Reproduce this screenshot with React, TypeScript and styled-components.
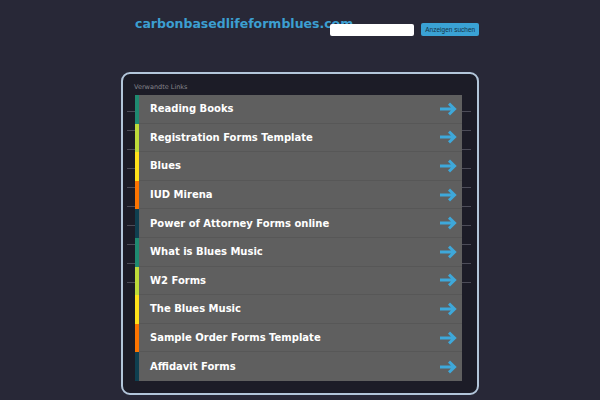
import styled, { createGlobalStyle } from 'styled-components';

const GlobalStyle = createGlobalStyle`
  html, body {
    margin: 0;
    padding: 0;
    background: #282837;
  }
  body {
    font-family: "DejaVu Sans", Verdana, sans-serif;
  }
`;

const Page = styled.div`
  width: 358px;
  margin: 0 auto;
  padding-top: 16px;
`;

const Header = styled.div`
  display: flex;
  align-items: flex-start;
  padding-left: 14px;
  height: 56px;
`;

const Title = styled.div`
  font-size: 12.5px;
  line-height: 15px;
  font-weight: bold;
  color: #3c9fd1;
  white-space: nowrap;
`;

const SearchForm = styled.div`
  display: flex;
  align-items: center;
  gap: 7px;
  margin-left: -23px;
  margin-top: 7px;
`;

const SearchInput = styled.div`
  width: 84px;
  height: 12px;
  background: #ffffff;
  border-radius: 2px;
`;

const SearchButton = styled.div`
  width: 58px;
  height: 13px;
  background: #3aa2d4;
  border-radius: 2px;
  color: #173246;
  font-family: "Liberation Sans", Arial, sans-serif;
  font-size: 6.5px;
  line-height: 13px;
  text-align: center;
`;

const Panel = styled.div`
  border: 2px solid #b3c6da;
  border-radius: 9px;
  background: #1c1c27;
  padding: 9px 6px 12px 4px;
  height: 323px;
  box-sizing: border-box;
`;

const Label = styled.div`
  font-size: 6.5px;
  line-height: 9px;
  color: #85858c;
  margin-left: 7px;
  margin-bottom: 3px;
`;

const ListFrame = styled.div`
  padding: 0 9px 0 8px;
  background-image: repeating-linear-gradient(
    to bottom,
    transparent 0,
    transparent 18px,
    #4c4c58 18px,
    #4c4c58 19px
  );
  background-size: 100% 190px;
  background-position: 0 -2px;
  background-repeat: no-repeat;
`;

const List = styled.div`
  display: flex;
  flex-direction: column;
`;

const Row = styled.div<{ $bar: string }>`
  display: flex;
  height: 28.6px;
  border-left: 4px solid ${({ $bar }) => $bar};
  background: #5f5f5f;
`;

const RowInner = styled.div<{ $last: boolean }>`
  flex: 1;
  display: flex;
  align-items: center;
  justify-content: space-between;
  padding: 0 5px 0 11px;
  border-bottom: ${({ $last }) => ($last ? 'none' : '1px solid #575757')};
  box-sizing: border-box;
`;

const RowText = styled.span`
  color: #ffffff;
  font-weight: bold;
  font-size: 10px;
`;

const Arrow = () => (
  <svg width="18" height="14" viewBox="0 0 18 14">
    <path
      d="M1 7 H15.5 M10 1.6 L15.6 7 L10 12.4"
      fill="none"
      stroke="#3ea8da"
      strokeWidth="2.9"
      strokeLinecap="butt"
      strokeLinejoin="miter"
    />
  </svg>
);

const bars = ['#1f8a70', '#bedb39', '#ffe11a', '#fd7400', '#0f3f50'];

const links = [
  'Reading Books',
  'Registration Forms Template',
  'Blues',
  'IUD Mirena',
  'Power of Attorney Forms online',
  'What is Blues Music',
  'W2 Forms',
  'The Blues Music',
  'Sample Order Forms Template',
  'Affidavit Forms',
];

const App = () => {
  return (
    <>
      <GlobalStyle />
      <Page>
        <Header>
          <Title>carbonbasedlifeformblues.com</Title>
          <SearchForm>
            <SearchInput />
            <SearchButton>Anzeigen suchen</SearchButton>
          </SearchForm>
        </Header>
        <Panel>
          <Label>Verwandte Links</Label>
          <ListFrame>
            <List>
              {links.map((link, i) => (
                <Row key={link} $bar={bars[i % bars.length]}>
                  <RowInner $last={i === links.length - 1}>
                    <RowText>{link}</RowText>
                    <Arrow />
                  </RowInner>
                </Row>
              ))}
            </List>
          </ListFrame>
        </Panel>
      </Page>
    </>
  );
};

export default App;
